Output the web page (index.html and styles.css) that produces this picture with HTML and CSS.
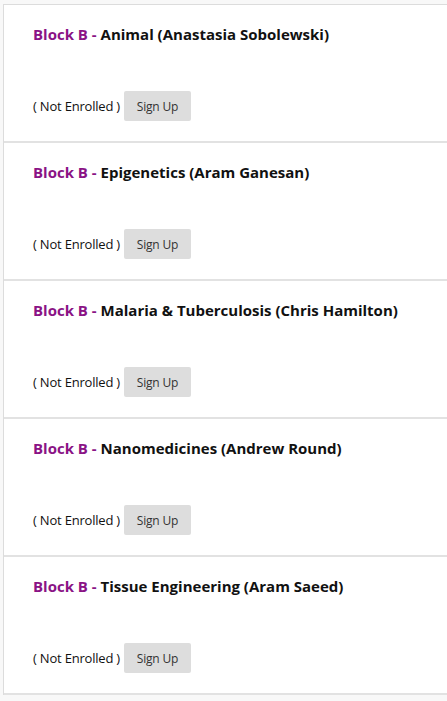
FILE: index.html
```html
<!DOCTYPE html>
<html>
<head>
<meta charset="utf-8">
<link rel="stylesheet" href="styles.css">
</head>
<body>
<div class="list">
  <div class="card">
    <h3 class="title"><span class="block">Block B - </span>Animal (Anastasia Sobolewski)</h3>
    <div class="actions"><span class="status">( Not Enrolled )</span><button class="btn">Sign Up</button></div>
  </div>
  <div class="card">
    <h3 class="title"><span class="block">Block B - </span>Epigenetics (Aram Ganesan)</h3>
    <div class="actions"><span class="status">( Not Enrolled )</span><button class="btn">Sign Up</button></div>
  </div>
  <div class="card">
    <h3 class="title"><span class="block">Block B - </span>Malaria &amp; Tuberculosis (Chris Hamilton)</h3>
    <div class="actions"><span class="status">( Not Enrolled )</span><button class="btn">Sign Up</button></div>
  </div>
  <div class="card">
    <h3 class="title"><span class="block">Block B - </span>Nanomedicines (Andrew Round)</h3>
    <div class="actions"><span class="status">( Not Enrolled )</span><button class="btn">Sign Up</button></div>
  </div>
  <div class="card">
    <h3 class="title"><span class="block">Block B - </span>Tissue Engineering (Aram Saeed)</h3>
    <div class="actions"><span class="status">( Not Enrolled )</span><button class="btn">Sign Up</button></div>
  </div>
</div>
</body>
</html>
```
FILE: styles.css
```css
html, body {
  margin: 0;
  padding: 0;
  background: #f8f8f8;
  font-family: "Open Sans", "Noto Sans", sans-serif;
  color: #111;
}
body {
  padding: 4px 0 0 3px;
}
.list {
  background: #fff;
  border-top: 1px solid #dcdcdc;
  border-left: 1px solid #dcdcdc;
  margin-right: -20px;
}
.card {
  padding: 19px 29px 20px 29px;
  border-bottom: 2px solid #e2e2e2;
  height: 97px;
  display: flex;
  flex-direction: column;
  justify-content: space-between;
}
.title {
  margin: 0;
  font-size: 15px;
  line-height: 21px;
  font-weight: 700;
  color: #111;
}
.block {
  color: #8a1385;
}
.actions {
  display: flex;
  align-items: center;
  gap: 4px;
}
.status {
  font-size: 13px;
  letter-spacing: -0.2px;
  color: #111;
}
.btn {
  font-family: "Open Sans", "Noto Sans", sans-serif;
  font-size: 12px;
  letter-spacing: -0.2px;
  color: #333;
  background: #dddddd;
  border: none;
  border-radius: 2px;
  width: 67px;
  height: 30px;
  padding: 0;
}
```
